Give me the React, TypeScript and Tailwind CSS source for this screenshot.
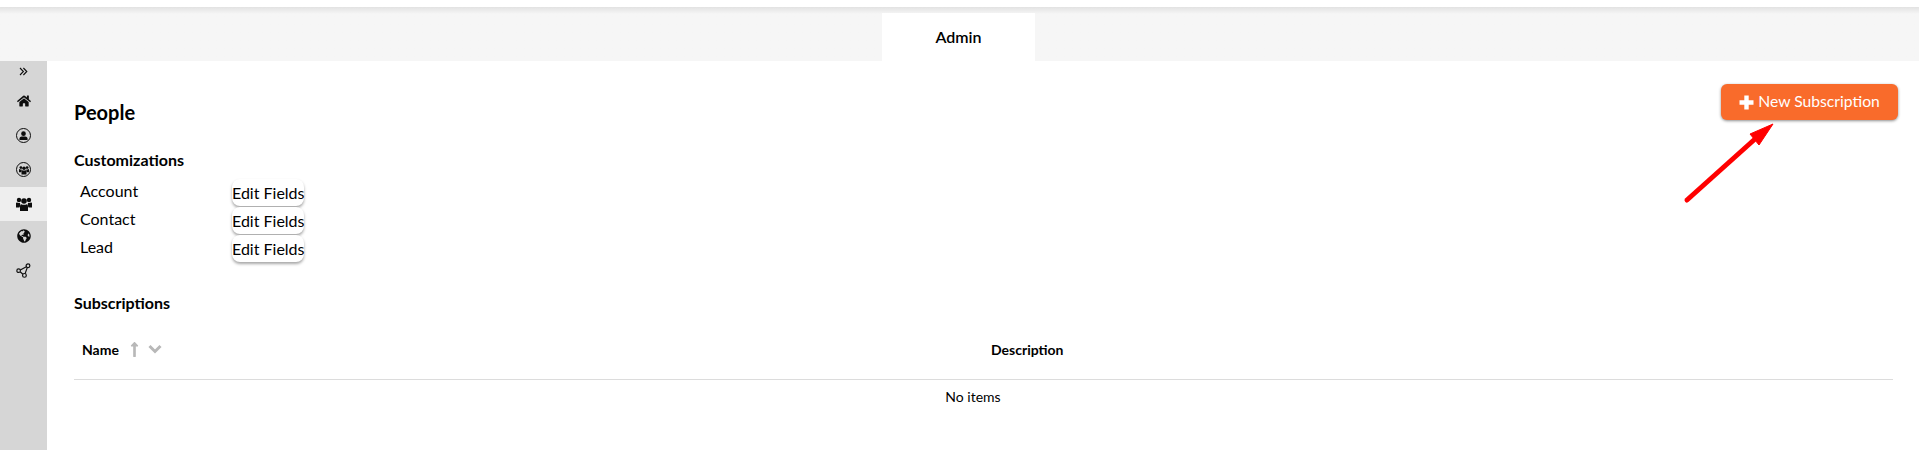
import { FaGlobeAmericas, FaHome, FaLongArrowAltUp } from "react-icons/fa";

const customizations = ["Account", "Contact", "Lead"];

function ShareIcon() {
  return (
    <svg width="15" height="15" viewBox="0 0 16 16" fill="none" stroke="#111" strokeWidth="1.3">
      <circle cx="2.8" cy="8.2" r="1.9" />
      <circle cx="12.8" cy="3" r="2" />
      <circle cx="9" cy="13.2" r="2" />
      <path d="M4.6 7.5L11 3.9M4.4 9.4L7.4 12M9.7 11.3L12 4.9" />
    </svg>
  );
}

function PeopleIcon({ size }: { size: number }) {
  return (
    <svg width={size} height={size} viewBox="0 0 16 16" fill="#0d0d0d">
      <circle cx="3" cy="4" r="2.2" />
      <circle cx="13" cy="4" r="2.2" />
      <circle cx="8" cy="5" r="2.8" />
      <path d="M0 7.2C0 6.6.6 6.4 1 6.6C2 7.2 3.2 7.2 4 6.8L4.4 9.5L3.4 11.5H0Z" />
      <path d="M16 7.2C16 6.6 15.4 6.4 15 6.6C14 7.2 12.8 7.2 12 6.8L11.6 9.5L12.6 11.5H16Z" />
      <path d="M5.2 8.2C6.8 9 9.2 9 10.8 8.2C11.8 8.6 12 10 12 11V15H4V11C4 10 4.2 8.6 5.2 8.2Z" />
    </svg>
  );
}

function Sidebar() {
  return (
    <div className="w-[47px] shrink-0 bg-[#d6d6d6] text-[#0d0d0d]">
      <div className="flex h-[23px] items-center justify-center pb-[2px]">
        <svg width="9" height="9" viewBox="0 0 9 9" fill="none" stroke="#0d0d0d" strokeWidth="1.1">
          <path d="M1 1L4.4 4.5L1 8M4.4 1L7.8 4.5L4.4 8" />
        </svg>
      </div>
      <div className="flex h-[34px] items-center justify-center text-[14px]">
        <FaHome />
      </div>
      <div className="flex h-[34px] items-center justify-center">
        <div className="flex h-[15px] w-[15px] items-center justify-center rounded-full border-[1.5px] border-[#0d0d0d]">
          <svg width="9" height="9" viewBox="0 0 10 10" fill="#0d0d0d">
            <circle cx="5" cy="3" r="2.6" />
            <path d="M0.5 10V8.4C0.5 6.8 2 6 3 6H7C8 6 9.5 6.8 9.5 8.4V10Z" />
          </svg>
        </div>
      </div>
      <div className="flex h-[35px] items-center justify-center">
        <div className="flex h-[15px] w-[15px] items-center justify-center rounded-full border-[1.5px] border-[#0d0d0d]">
          <PeopleIcon size={10} />
        </div>
      </div>
      <div className="flex h-[34px] items-center justify-center bg-[#eeeeee] pb-[1px]">
        <PeopleIcon size={16} />
      </div>
      <div className="flex h-[34px] items-center justify-center pb-[4px] text-[14px]">
        <FaGlobeAmericas />
      </div>
      <div className="flex h-[34px] items-center justify-center pb-[4px]">
        <ShareIcon />
      </div>
    </div>
  );
}

export default function App() {
  return (
    <div className="relative h-[450px] overflow-hidden bg-white font-['Lato','Open_Sans',sans-serif] text-black">
      <div className="h-[7px] bg-white" />
      <div className="flex h-[54px] items-end justify-center bg-[#f6f6f6] bg-gradient-to-b from-[#e2e2e2] to-[#f6f6f6] to-[7px]">
        <div className="mr-[2px] flex h-[48px] w-[153px] items-center justify-center bg-white text-[16px] font-semibold">
          Admin
        </div>
      </div>

      <div className="flex h-[389px]">
        <Sidebar />

        <div className="flex-1 pl-[27px] pr-[21px]">
          <div className="flex items-start justify-between">
            <h1 className="mt-[39px] text-[20px] leading-6 font-bold">People</h1>
            <button className="mt-[23px] flex h-[36px] w-[177px] items-center justify-center gap-[4px] rounded-md bg-[#f96b2b] text-[15.7px] text-white shadow-[0_1px_3px_rgba(0,0,0,0.45)]">
              <svg width="15" height="15" viewBox="0 0 15 15" fill="none" stroke="#ffffff" strokeWidth="4.4">
                <path d="M7.5 0.5V14.5M0.5 7.5H14.5" />
              </svg>
              New Subscription
            </button>
          </div>

          <h2 className="mt-[26px] text-[16px] leading-5 font-bold">Customizations</h2>
          <div className="mt-[9px] flex flex-col gap-[1px]">
            {customizations.map((name) => (
              <div key={name} className="flex h-[27px]">
                <span className="w-[158px] pl-[6px] text-[16px] leading-6">{name}</span>
                <button className="h-[27px] w-[72px] rounded-lg bg-white text-center text-[16px] leading-6 whitespace-nowrap shadow-[0_2px_3px_rgba(0,0,0,0.35)]">
                  Edit Fields
                </button>
              </div>
            ))}
          </div>

          <h2 className="mt-[31px] text-[16px] leading-5 font-bold">Subscriptions</h2>
          <div className="mt-[6px] mr-[5px] flex h-[61px] items-center border-b border-[#dcdcdc] text-[14px] font-bold">
            <div className="flex w-[910px] items-center pl-[8px]">
              Name
              <FaLongArrowAltUp className="ml-[7px] text-[17px] text-[#b8b8b8]" />
              <svg className="ml-[5px]" width="14" height="10" viewBox="0 0 14 10" fill="none" stroke="#b8b8b8" strokeWidth="3">
                <path d="M1.5 2L7 7.5L12.5 2" />
              </svg>
            </div>
            <div className="pl-[7px]">Description</div>
          </div>
          <div className="mt-[7px] pr-[26px] text-center text-[14px] leading-5">No items</div>
        </div>
      </div>

      {/* red annotation arrow drawn over the page */}
      <svg className="absolute top-[115px] left-[1680px]" width="100" height="90" viewBox="0 0 100 90">
        <path d="M7 85L75 24" stroke="#ff0000" strokeWidth="5" strokeLinecap="round" />
        <path d="M93 9L70 19L79 30Z" fill="#ff0000" stroke="#ff0000" strokeWidth="1" />
      </svg>
    </div>
  );
}
